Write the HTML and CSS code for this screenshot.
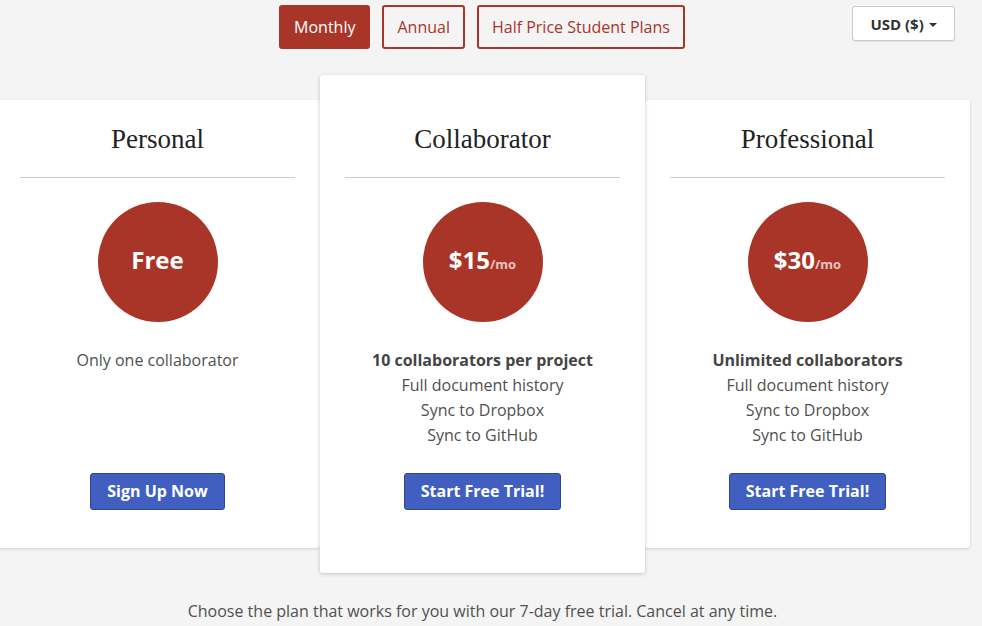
FILE: index.html
```html
<!DOCTYPE html>
<html>
<head>
<meta charset="utf-8">
<link rel="stylesheet" href="styles.css">
</head>
<body>
<div class="container">
  <div class="toolbar">
    <div></div>
    <div class="periods">
      <button class="period active">Monthly</button>
      <button class="period">Annual</button>
      <button class="period">Half Price Student Plans</button>
    </div>
    <button class="currency">USD ($) <span class="caret"></span></button>
  </div>
  <div class="plans">
    <div class="card">
      <h2 class="title">Personal</h2>
      <hr class="rule">
      <div class="circle"><span class="price">Free</span></div>
      <ul class="features">
        <li>Only one collaborator</li>
      </ul>
      <button class="cta">Sign Up Now</button>
    </div>
    <div class="card featured">
      <h2 class="title">Collaborator</h2>
      <hr class="rule">
      <div class="circle"><span class="price">$15</span><span class="per">/mo</span></div>
      <ul class="features">
        <li class="strong">10 collaborators per project</li>
        <li>Full document history</li>
        <li>Sync to Dropbox</li>
        <li>Sync to GitHub</li>
      </ul>
      <button class="cta">Start Free Trial!</button>
    </div>
    <div class="card">
      <h2 class="title">Professional</h2>
      <hr class="rule">
      <div class="circle"><span class="price">$30</span><span class="per">/mo</span></div>
      <ul class="features">
        <li class="strong">Unlimited collaborators</li>
        <li>Full document history</li>
        <li>Sync to Dropbox</li>
        <li>Sync to GitHub</li>
      </ul>
      <button class="cta">Start Free Trial!</button>
    </div>
  </div>
  <p class="note">Choose the plan that works for you with our 7-day free trial. Cancel at any time.</p>
</div>
</body>
</html>
```

FILE: styles.css
```css
* { box-sizing: border-box; }
html, body { margin: 0; padding: 0; }
body {
  background: #f4f4f4;
  font-family: "Open Sans", "Noto Sans", sans-serif;
  color: #505050;
  overflow: hidden;
}
.container {
  width: 975px;
  margin-left: -5px;
}
.toolbar {
  display: grid;
  grid-template-columns: 1fr auto 1fr;
  padding: 5px 15px 0;
  align-items: start;
}
.periods {
  display: flex;
  gap: 12px;
  margin-left: -1px;
}
.period {
  height: 44px;
  padding: 0 13px;
  border: 2px solid #a93529;
  border-radius: 3px;
  background: transparent;
  color: #a93529;
  font-family: inherit;
  font-size: 16px;
}
.period.active {
  background: #a93529;
  color: #fff;
}
.currency {
  justify-self: end;
  margin-top: 1px;
  height: 35px;
  width: 103px;
  border: 1px solid #ccc;
  border-radius: 3px;
  background: #fff;
  color: #333;
  font-family: inherit;
  font-weight: 700;
  font-size: 15px;
  padding: 0;
  box-shadow: 0 1px 1px rgba(0,0,0,0.08);
}
.caret {
  display: inline-block;
  width: 0; height: 0;
  border-left: 4px solid transparent;
  border-right: 4px solid transparent;
  border-top: 4px solid #333;
  vertical-align: middle;
  margin-left: 1px;
}
.plans {
  display: flex;
  align-items: center;
  margin-top: 26px;
}
.card {
  width: 325px;
  background: #fff;
  border-radius: 3px;
  box-shadow: 0 1px 3px rgba(0,0,0,0.15);
  padding: 24px 25px 38px;
  text-align: center;
}
.card.featured {
  padding-top: 49px;
  padding-bottom: 63px;
  position: relative;
  z-index: 1;
  box-shadow: 0 1px 4px rgba(0,0,0,0.2);
}
.title {
  margin: 0 0 23px;
  font-family: "Liberation Serif", "DejaVu Serif", serif;
  font-weight: 400;
  font-size: 27px;
  line-height: 30px;
  color: #222;
}
.rule {
  margin: 0;
  border: 0;
  border-top: 1px solid #ccc;
}
.circle {
  width: 120px;
  height: 120px;
  margin: 24px auto 0;
  padding-bottom: 5px;
  border-radius: 50%;
  background: #a93529;
  color: #fff;
  display: flex;
  align-items: center;
  justify-content: center;
  font-weight: 700;
}
.price { font-size: 24px; }
.per {
  font-size: 13px;
  color: #e6c4c0;
  margin-top: 8px;
}
.features {
  list-style: none;
  margin: 26px 0 0;
  padding: 0;
  height: 100px;
  font-size: 16px;
  line-height: 25px;
}
.features .strong {
  font-weight: 700;
  color: #444;
}
.cta {
  margin-top: 25px;
  height: 37px;
  padding: 0 16px 2px;
  background: #405fc0;
  border: 1px solid #2c468f;
  border-radius: 3px;
  color: #fff;
  font-family: inherit;
  font-weight: 700;
  font-size: 16px;
}
.note {
  margin: 27px 0 0;
  text-align: center;
  font-size: 16px;
  line-height: 22px;
}
```
